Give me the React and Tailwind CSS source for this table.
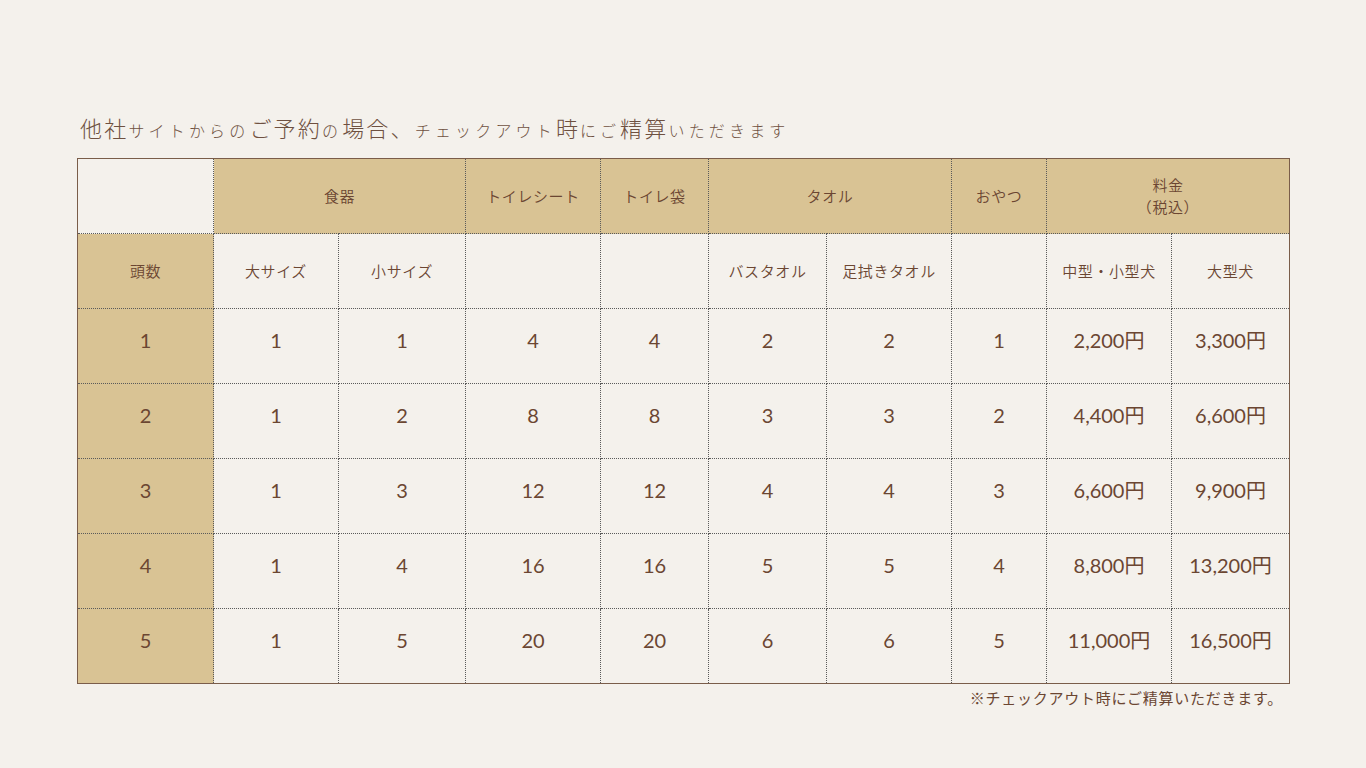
const rows = [
  ['1', '1', '1', '4', '4', '2', '2', '1', '2,200円', '3,300円'],
  ['2', '1', '2', '8', '8', '3', '3', '2', '4,400円', '6,600円'],
  ['3', '1', '3', '12', '12', '4', '4', '3', '6,600円', '9,900円'],
  ['4', '1', '4', '16', '16', '5', '5', '4', '8,800円', '13,200円'],
  ['5', '1', '5', '20', '20', '6', '6', '5', '11,000円', '16,500円'],
];

const widths = [136, 125, 127, 135, 108, 118, 125, 95, 125, 118];

const cell = 'border border-dotted border-[#5a5a5a] text-center align-middle';
const head = `${cell} bg-[#d9c394] text-[15px] font-[350] tracking-[0.04em]`;
const sub = `${cell} text-[15px] font-[350] tracking-[0.04em]`;

const Big = ({ children }) => (
  <span className="text-[22px] tracking-[0.1em]">{children}</span>
);
const Small = ({ children }) => (
  <span className="text-[16px] tracking-[0.26em]">{children}</span>
);

export default function App() {
  return (
    <div
      className="min-h-[768px] w-full bg-[#f4f1ec] text-[#6b4632] pt-[111px]"
      style={{ fontFamily: "'Noto Sans CJK JP', sans-serif" }}
    >
      <div className="w-[1212px] ml-[77px]">
        <h1 className="pl-[3px] mb-[12px] font-light leading-[32px] text-[#6e5040] whitespace-nowrap">
          <Big>他社</Big>
          <Small>サイトからの</Small>
          <Big>ご予約</Big>
          <Small>の</Small>
          <Big>場合、</Big>
          <Small>チェックアウト</Small>
          <Big>時</Big>
          <Small>にご</Small>
          <Big>精算</Big>
          <Small>いただきます</Small>
        </h1>

        <table className="w-[1212px] table-fixed border-collapse border border-solid border-[#7a5d4a]">
          <colgroup>
            {widths.map((w, i) => (
              <col key={i} style={{ width: w }} />
            ))}
          </colgroup>
          <tbody>
            <tr className="h-[75px]">
              <td className={`${cell} bg-[#f4f1ec]`}></td>
              <td colSpan={2} className={head}>食器</td>
              <td className={head}>トイレシート</td>
              <td className={head}>トイレ袋</td>
              <td colSpan={2} className={head}>タオル</td>
              <td className={head}>おやつ</td>
              <td colSpan={2} className={`${head} leading-[22px]`}>
                料金
                <br />
                （税込）
              </td>
            </tr>
            <tr className="h-[75px]">
              <td className={head}>頭数</td>
              <td className={sub}>大サイズ</td>
              <td className={sub}>小サイズ</td>
              <td className={sub}></td>
              <td className={sub}></td>
              <td className={sub}>バスタオル</td>
              <td className={sub}>足拭きタオル</td>
              <td className={sub}></td>
              <td className={sub}>中型・小型犬</td>
              <td className={sub}>大型犬</td>
            </tr>
            {rows.map((r, i) => (
              <tr key={i} className="h-[75px]">
                {r.map((v, j) => (
                  <td
                    key={j}
                    className={`${cell} text-[20px] font-normal pb-[12px] ${j === 0 ? 'bg-[#d9c394]' : ''}`}
                    style={{ fontFamily: "Lato, 'Noto Sans CJK JP', sans-serif" }}
                  >
                    {v}
                  </td>
                ))}
              </tr>
            ))}
          </tbody>
        </table>

        <p className="mt-[3px] pr-[6px] text-right text-[15px] tracking-[0.05em] text-[#6b4632]">
          ※チェックアウト時にご精算いただきます。
        </p>
      </div>
    </div>
  );
}
